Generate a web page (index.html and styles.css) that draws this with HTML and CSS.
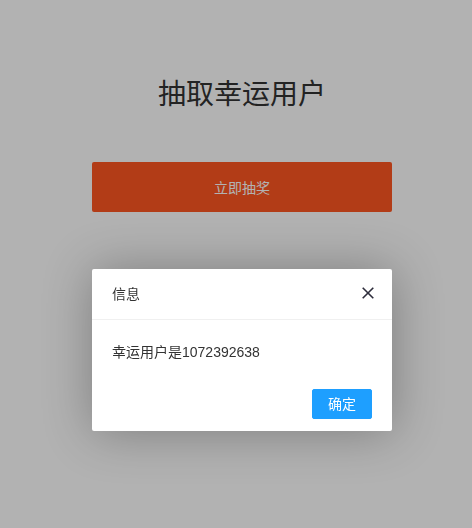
FILE: index.html
```html
<!DOCTYPE html>
<html lang="zh">
<head>
<meta charset="utf-8">
<title>抽取幸运用户</title>
<link rel="stylesheet" href="styles.css">
</head>
<body>
<main class="page">
  <h1 class="title">抽取幸运用户</h1>
  <button class="draw-btn" type="button">立即抽奖</button>
</main>
<div class="shade"></div>
<div class="dialog">
  <div class="dialog-head">
    <span class="dialog-title">信息</span>
    <span class="dialog-close">
      <svg width="12" height="12" viewBox="0 0 12 12"><path d="M0.7 0.7L11.3 11.3M11.3 0.7L0.7 11.3" stroke="#2e2d3c" stroke-width="1.6" fill="none"/></svg>
    </span>
  </div>
  <div class="dialog-body">幸运用户是1072392638</div>
  <div class="dialog-foot"><button class="ok-btn" type="button">确定</button></div>
</div>
</body>
</html>
```
FILE: styles.css
```css
html, body {
  margin: 0;
  padding: 0;
  background: #ffffff;
  font-family: "Liberation Sans", "Noto Sans CJK SC", sans-serif;
}
.page {
  display: flex;
  flex-direction: column;
  align-items: center;
  padding: 75px 0 0 12px;
}
.title {
  margin: 0;
  font-size: 28px;
  line-height: 40px;
  font-weight: normal;
  color: #333333;
}
.draw-btn {
  margin-top: 47px;
  width: 300px;
  height: 50px;
  border: none;
  border-radius: 2px;
  background: #FF5722;
  color: #ffffff;
  font-family: inherit;
  font-size: 14px;
}
.shade {
  position: fixed;
  inset: 0;
  background: rgba(0, 0, 0, 0.3);
}
.dialog {
  position: absolute;
  left: 92px;
  top: 269px;
  width: 300px;
  background: #ffffff;
  border-radius: 2px;
  box-shadow: 1px 1px 50px rgba(0, 0, 0, 0.3);
  font-size: 14px;
}
.dialog-head {
  position: relative;
  height: 50px;
  line-height: 50px;
  padding: 0 80px 0 20px;
  border-bottom: 1px solid #F0F0F0;
  color: #333333;
}
.dialog-close {
  position: absolute;
  right: 18px;
  top: 18px;
  width: 12px;
  height: 12px;
  line-height: 0;
}
.dialog-body {
  padding: 20px;
  line-height: 24px;
  color: #333333;
}
.dialog-foot {
  padding: 0 15px 12px;
  text-align: right;
  line-height: 0;
}
.ok-btn {
  margin: 5px 5px 0;
  height: 30px;
  padding: 0 15px;
  border: 1px solid #1E9FFF;
  border-radius: 2px;
  background: #1E9FFF;
  color: #ffffff;
  font-family: inherit;
  font-size: 14px;
  line-height: 28px;
}
```
